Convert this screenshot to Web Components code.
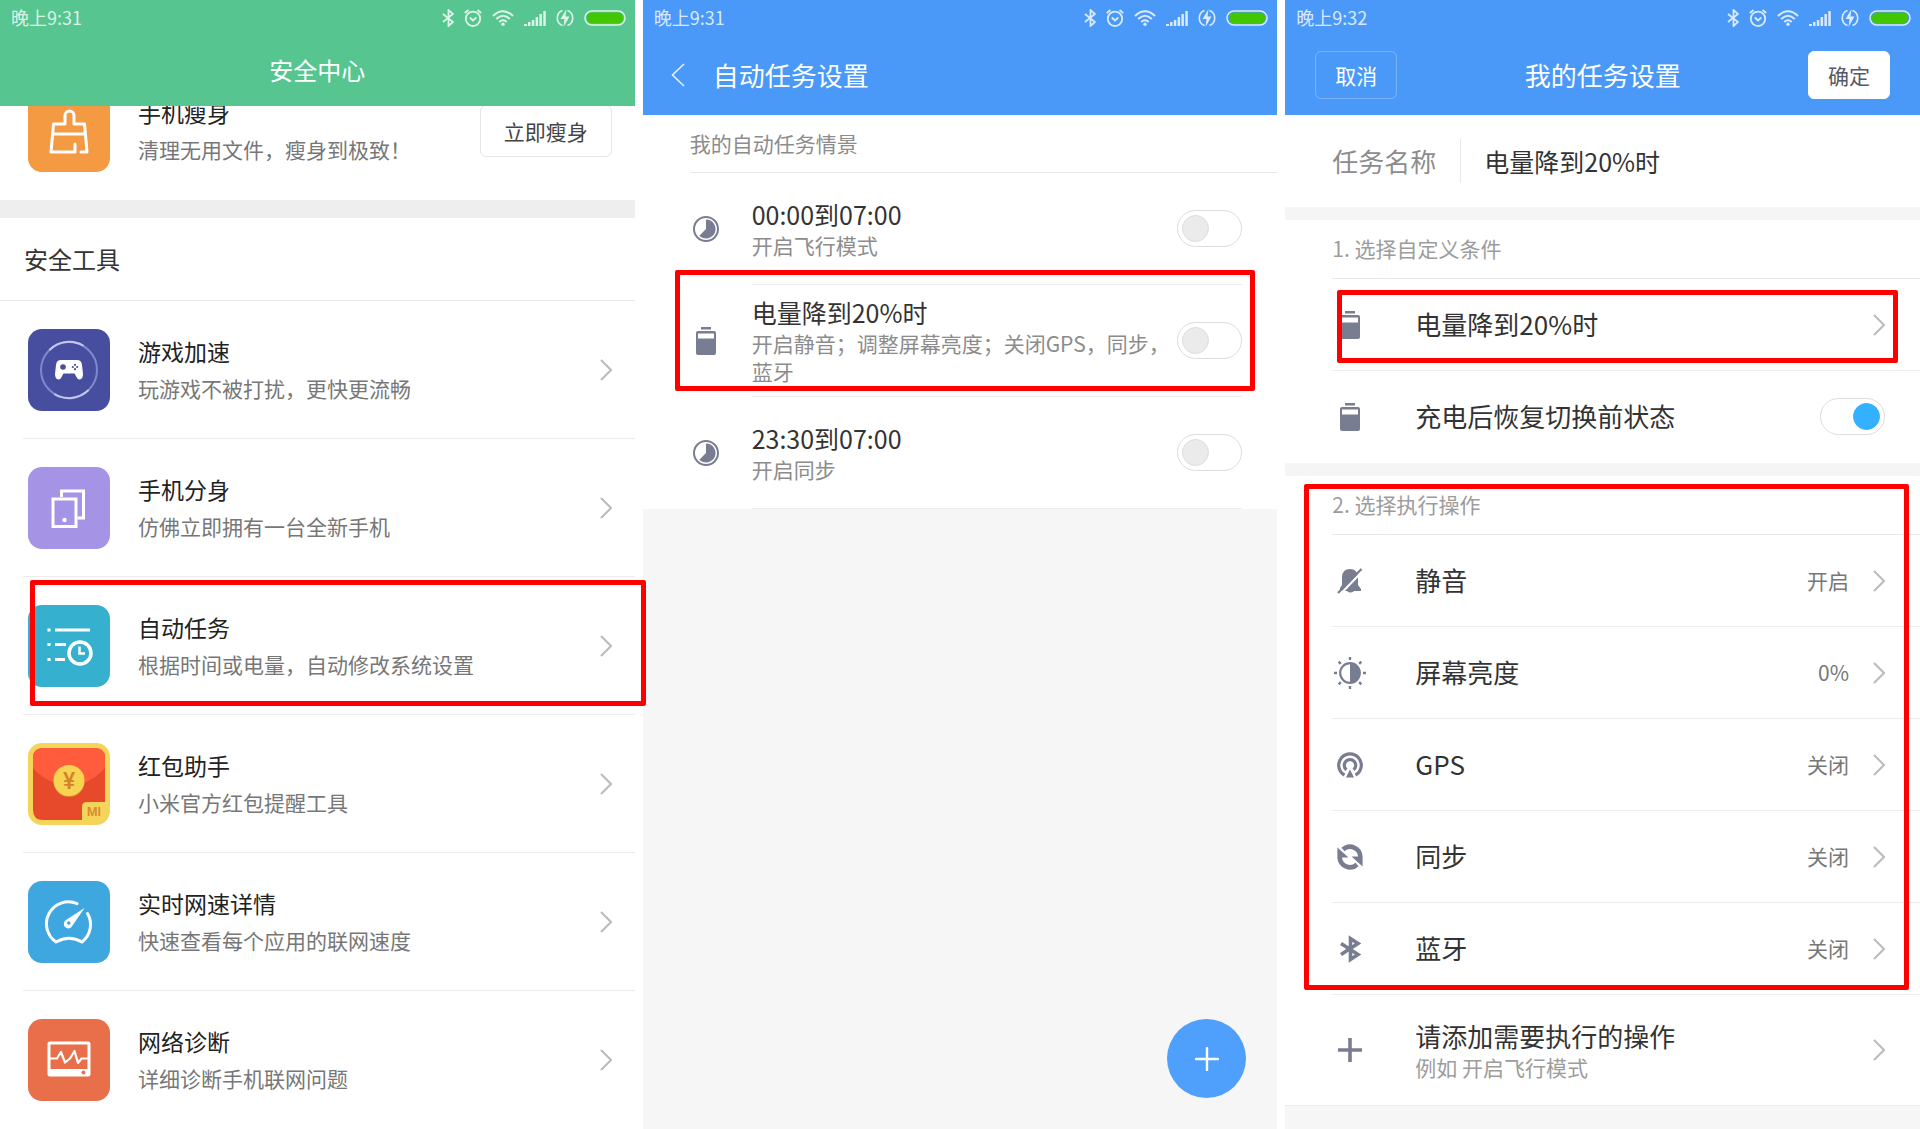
<!DOCTYPE html>
<html lang="zh-CN">
<head>
<meta charset="utf-8">
<title>安全中心</title>
<style>
    body {
        margin: 0;
        background: #fff;
        color: #333;
        font-family: "Noto Sans CJK SC", sans-serif;
        font-weight: 400;
    }

    main {
        display: grid;
        grid-template-columns: repeat(3, minmax(0, 1fr));
        gap: 8px;
        min-height: 100vh;
    }
</style>
</head>
<body>
<main>
    <phone-screen>
        <title-bar slot="header" time="晚上9:31" theme="green">安全中心</title-bar>
        <tool-row class="first" icon="broom" heading="手机瘦身" note="清理无用文件，瘦身到极致！" action="立即瘦身"></tool-row>
        <band-gap size="large"></band-gap>
        <section-title size="large">安全工具</section-title>
        <tool-row icon="game" heading="游戏加速" note="玩游戏不被打扰，更快更流畅"></tool-row>
        <tool-row icon="clone" heading="手机分身" note="仿佛立即拥有一台全新手机"></tool-row>
        <tool-row icon="task" heading="自动任务" note="根据时间或电量，自动修改系统设置">
            <mark-box style="--inset: 3px -11px 9px 30px"></mark-box>
        </tool-row>
        <tool-row icon="packet" heading="红包助手" note="小米官方红包提醒工具"></tool-row>
        <tool-row icon="speed" heading="实时网速详情" note="快速查看每个应用的联网速度"></tool-row>
        <tool-row icon="monitor" heading="网络诊断" note="详细诊断手机联网问题"></tool-row>
    </phone-screen>

    <phone-screen tinted>
        <title-bar slot="header" time="晚上9:31" back>自动任务设置</title-bar>
        <section-title>我的自动任务情景</section-title>
        <task-row icon="clock" heading="00:00到07:00" note="开启飞行模式"></task-row>
        <task-row icon="battery" heading="电量降到20%时" note="开启静音；调整屏幕亮度；关闭GPS，同步，蓝牙">
            <mark-box style="--inset: -15px 22px 6px 32px"></mark-box>
        </task-row>
        <task-row icon="clock" heading="23:30到07:00" note="开启同步"></task-row>
        <add-button slot="float" label="添加任务"></add-button>
    </phone-screen>

    <phone-screen tinted>
        <title-bar slot="header" time="晚上9:32" cancel="取消" confirm="确定">我的任务设置</title-bar>
        <name-field label="任务名称" value="电量降到20%时"></name-field>
        <band-gap></band-gap>
        <option-group heading="1. 选择自定义条件">
            <option-row icon="battery" heading="电量降到20%时">
                <mark-box style="--inset: 11px 22px 8px 52px"></mark-box>
            </option-row>
            <option-row icon="battery" heading="充电后恢复切换前状态" toggle plain></option-row>
        </option-group>
        <band-gap></band-gap>
        <option-group heading="2. 选择执行操作">
            <option-row icon="mute" heading="静音" value="开启"></option-row>
            <option-row icon="brightness" heading="屏幕亮度" value="0%"></option-row>
            <option-row icon="gps" heading="GPS" value="关闭"></option-row>
            <option-row icon="sync" heading="同步" value="关闭"></option-row>
            <option-row icon="bluetooth" heading="蓝牙" value="关闭"></option-row>
            <mark-box style="--inset: 8px 11px 5px 19px"></mark-box>
        </option-group>
        <option-row icon="plus" heading="请添加需要执行的操作" note="例如 开启飞行模式" wide></option-row>
    </phone-screen>
</main>

<script>
const html = String.raw;

// [width, height, markup], the viewBox is the same as the size
const ICONS = {
    // app tiles
    broom: [82, 82, html`<rect width="82" height="82" rx="14" fill="#f39a42"/>
        <path d="M47 62H23L25.500 34H37V25.500a4.500 4.500 0 0 1 9 0V34H56.500L59 62H53M25 44H57M47 54V62" fill="none" stroke="#fff" stroke-width="3" stroke-linejoin="round" stroke-linecap="round"/>`],
    game: [82, 82, html`<rect width="82" height="82" rx="14" fill="#474ea0"/>
        <circle cx="41" cy="41" r="28" fill="none" stroke="#8189cb" stroke-width="2"/>
        <path d="M22 20.500A28 28 0 0 1 55 16.500M60 61.500A28 28 0 0 1 27 65.500" fill="none" stroke="#c3c8ee" stroke-width="2" stroke-linecap="round"/>
        <path d="M33 31H49Q53.500 31 54 36L55 45Q55 50 51.500 50.500Q49.500 50.500 48.500 48L46.500 44.500H35.500L33.500 48Q32.500 50.500 30.500 50.500Q27 50 27 45L28 36Q28.500 31 33 31Z" fill="#fff"/>
        <circle cx="35" cy="38" r="2.800" fill="#474ea0"/>
        <g fill="#474ea0"><circle cx="47" cy="35.800" r="1.100"/><circle cx="47" cy="40.200" r="1.100"/><circle cx="44.800" cy="38" r="1.100"/><circle cx="49.200" cy="38" r="1.100"/></g>`],
    clone: [82, 82, html`<rect width="82" height="82" rx="14" fill="#a593e6"/>
        <path d="M33.500 30V24H55.500V51H49.500" fill="none" stroke="#fff" stroke-width="3"/>
        <rect x="25" y="32" width="23" height="27.500" fill="none" stroke="#fff" stroke-width="3"/>
        <circle cx="36.500" cy="53" r="2.200" fill="#fff"/>`],
    task: [82, 82, html`<rect width="82" height="82" rx="14" fill="#35b0ce"/>
        <path d="M19.500 25H22.500M27 25H62M19.500 39.500H22.500M27 39.500H38M19.500 54.500H22.500M27 54.500H37" stroke="#fff" stroke-width="3"/>
        <circle cx="52" cy="48" r="11" fill="none" stroke="#fff" stroke-width="3.500"/>
        <path d="M51.500 41.500V48.500H57" fill="none" stroke="#fff" stroke-width="2.500"/>`],
    packet: [82, 82, html`<rect width="82" height="82" rx="14" fill="#f4d55a"/>
        <path d="M15 5H67Q77 5 77 15V59H59Q54 59 54 64V77H15Q5 77 5 67V15Q5 5 15 5Z" fill="#e64a2b"/>
        <path d="M15 5H67Q77 5 77 15V25Q62 42 41 42T5 25V15Q5 5 15 5Z" fill="#ff5c3d"/>
        <circle cx="41" cy="38.500" r="15.500" fill="#dd8d31"/>
        <circle cx="41" cy="37.500" r="15.500" fill="#f6d350"/>
        <text x="41" y="46" text-anchor="middle" font-family="Roboto, sans-serif" font-size="23" font-weight="500" fill="#d5822c">¥</text>
        <text x="66" y="73" text-anchor="middle" font-family="Roboto, sans-serif" font-size="12" font-weight="700" fill="#dd8a30">MI</text>`],
    speed: [82, 82, html`<rect width="82" height="82" rx="14" fill="#3ea7e0"/>
        <path d="M49 22.600A22 22 0 0 0 28 61Q41 53.500 54 61A22 22 0 0 0 59.500 32.500" fill="none" stroke="#fff" stroke-width="3" stroke-linecap="round" stroke-linejoin="round"/>
        <path d="M56.500 27L44.500 44.500A4.500 4.500 0 1 1 38 39Z" fill="#fff"/>
        <circle cx="40.800" cy="42" r="1.800" fill="#3ea7e0"/>`],
    monitor: [82, 82, html`<rect width="82" height="82" rx="14" fill="#e86f4a"/>
        <rect x="21" y="24" width="40" height="32" rx="1" fill="none" stroke="#fff" stroke-width="3"/>
        <path d="M21 50H61V57H21Z" fill="#fff"/>
        <path d="M20 39.500H29L33 33L37 43.500L42 39.500L46.500 32L50 44L53.500 39.500H62" fill="none" stroke="#fff" stroke-width="2.200" stroke-linejoin="round"/>
        <circle cx="55.500" cy="53.500" r="2" fill="#e86f4a"/>`],

    // list glyphs
    clock: [26, 26, html`<circle cx="13" cy="13" r="12" fill="none" stroke="currentColor" stroke-width="2"/>
        <path d="M13 3.500A9.500 9.500 0 1 1 6.300 19.700L13 13Z" fill="currentColor"/>`],
    battery: [26, 28, html`<path d="M8 0H18V2.500H8ZM5 4H21Q23 4 23 6V26Q23 28 21 28H5Q3 28 3 26V6Q3 4 5 4ZM5 6.500V11.500H21V6.500Z" fill="currentColor" fill-rule="evenodd"/>`],
    mute: [26, 26, html`<path d="M13 1Q5.500 1 5 9V17L3 20V23H10Q13.500 26 17 23H24V21L21 17V9Q20.500 1 13 1Z" fill="currentColor"/>
        <path d="M27 1.500L3 26.500" stroke="#fff" stroke-width="2.200"/>
        <path d="M24.500 1L1 25" stroke="currentColor" stroke-width="2.200"/>`],
    brightness: [32, 32, html`<circle cx="16" cy="16" r="9.800" fill="none" stroke="currentColor" stroke-width="2.200"/>
        <path d="M16 6A10 10 0 0 1 16 26Z" fill="currentColor"/>
        <path d="M16 0V3M16 29V32M0 16H3M29 16H32M4.700 4.700L6.800 6.800M25.200 25.200L27.300 27.300M4.700 27.300L6.800 25.200M25.200 6.800L27.300 4.700" stroke="currentColor" stroke-width="2.400"/>`],
    gps: [26, 26, html`<path d="M7.500 23A11.300 11.300 0 1 1 18.500 23M9.500 17.800A5.700 5.700 0 1 1 16.500 17.800" fill="none" stroke="currentColor" stroke-width="3.200"/>
        <path d="M13 17.500L17 25.500H9Z" fill="currentColor"/>`],
    sync: [26, 26, html`<path d="M6 5.500A10.300 10.300 0 0 1 23.300 13M20 20.500A10.300 10.300 0 0 1 2.700 13" fill="none" stroke="currentColor" stroke-width="4.600"/>
        <path d="M14.500 12.500H25.600V22.500ZM11.500 13.500H.4V3.500Z" fill="currentColor"/>`],
    bluetooth: [26, 28, html`<path d="M4 8.500L21 19.500L13.500 24.500V3.500L21 8.500L4 19.500" fill="none" stroke="currentColor" stroke-width="3.600"/>`],
    plus: [26, 26, html`<path d="M13 1V25M1 13H25" stroke="currentColor" stroke-width="3.600"/>`],
    chevron: [12, 22, html`<path d="M1 1L11 11L1 21" fill="none" stroke="currentColor" stroke-width="2"/>`],
    back: [14, 24, html`<path d="M13 1L1.500 12L13 23" fill="none" stroke="currentColor" stroke-width="1.600" opacity=".85"/>`],
    add: [24, 24, html`<path d="M12 1V23M1 12H23" stroke="currentColor" stroke-width="2.400" stroke-linecap="round"/>`],

    // status bar
    'st-bluetooth': [12, 18, html`<path d="M1 5L11 13L6.500 17V1L11 5L1 13" fill="none" stroke="currentColor" stroke-width="1.800"/>`],
    'st-alarm': [18, 18, html`<circle cx="9" cy="9.800" r="7.200" fill="none" stroke="currentColor" stroke-width="1.800"/>
        <path d="M.8 4L4.500 1M17.200 4L13.500 1M5.800 8.500L9 11.500L12.300 8.500" fill="none" stroke="currentColor" stroke-width="1.800"/>`],
    'st-wifi': [22, 16, html`<path d="M1 6Q11-3.500 21 6M4.200 9Q11 2.500 17.800 9M7.300 12Q11 8.500 14.700 12" fill="none" stroke="currentColor" stroke-width="2"/>
        <circle cx="11" cy="14.200" r="1.700" fill="currentColor"/>`],
    'st-signal': [22, 15, html`<path d="M0 13H3V15H0ZM4 11H6.500V15H4ZM7.800 9H10.300V15H7.800ZM11.600 6H14.100V15H11.600ZM15.400 3H17.900V15H15.400ZM19.300 0H21.800V15H19.300Z" fill="currentColor"/>`],
    'st-charge': [18, 18, html`<path d="M6.500 1.500A8 8 0 0 0 6.500 16.500M11.500 1.500A8 8 0 0 1 11.500 16.500" fill="none" stroke="currentColor" stroke-width="1.600"/>
        <path d="M10.500 0L4.500 10H8.500L7.500 18L13.500 7.500H9.500Z" fill="currentColor"/>`],
    'st-power': [42, 16, html`<rect x="1" y="1" width="40" height="14" rx="7" fill="none" stroke="currentColor" stroke-width="1.500"/>
        <rect x="3" y="2.500" width="36" height="11" rx="5" fill="#42c600"/>`],
};

const icon = name => {
    const [w, h, body] = ICONS[name];
    return html`<svg class="Icon" width="${w}" height="${h}" viewBox="0 0 ${w} ${h}" aria-hidden="true">${body}</svg>`;
};

// Shared reset for every shadow root
const base = html`
    <style>
        :host { display: block; }
        *, :host { box-sizing: border-box; }
        a { color: inherit; text-decoration: none; }
        button, input { font: inherit; margin: 0; }
        .Icon { display: block; flex: none; }
    </style>
`;

class BaseElement extends HTMLElement {
    constructor() {
        super();
        this.attachShadow({ mode: 'open' });
    }

    connectedCallback() {
        this.shadowRoot.innerHTML = base + this.render();
    }

    attr(name) {
        return this.getAttribute(name) || '';
    }
}

class PhoneScreen extends BaseElement {
    render() {
        return html`
            <style>
                :host { position: relative; background: #fff; }
                :host([tinted]) { background: #f6f6f6; }
                ::slotted([slot=header]) { position: relative; z-index: 1; }
                ::slotted([slot=float]) { position: absolute; right: 31px; bottom: 31px; }
                /* list is scrolled a little way under the header */
                ::slotted(.first) { margin-top: -44px; }
            </style>
            <slot name="header"></slot>
            <slot></slot>
            <slot name="float"></slot>
        `;
    }
}

class StatusBar extends BaseElement {
    render() {
        return html`
            <style>
                :host {
                    display: flex;
                    align-items: center;
                    justify-content: space-between;
                    height: 36px;
                    padding: 0 9px 0 11px;
                    color: rgba(255, 255, 255, .8);
                    font-size: 18px;
                    line-height: 34px;
                }
                span { height: 36px; }
                .Icons { display: flex; align-items: center; gap: 10px; }
            </style>
            <span>${this.attr('time')}</span>
            <div class="Icons">
                ${['st-bluetooth', 'st-alarm', 'st-wifi', 'st-signal', 'st-charge', 'st-power'].map(icon).join('')}
            </div>
        `;
    }
}

class TitleBar extends BaseElement {
    render() {
        const back = this.hasAttribute('back');
        const cancel = this.attr('cancel');
        return html`
            <style>
                :host { background: #4a99f8; color: #fff; }
                :host([theme=green]) { background: #56c590; }
                .Bar {
                    display: grid;
                    grid-template-columns: 1fr auto 1fr;
                    align-items: center;
                    height: 79px;
                    padding: 0 30px 2px;
                }
                :host([theme=green]) .Bar { height: 70px; }
                :host([back]) .Bar { grid-template-columns: auto 1fr; gap: 28px; padding-left: 28px; }
                h1 { grid-column: 2; margin: 0; font-size: 26px; font-weight: 400; line-height: 36px; }
                :host([theme=green]) h1 { font-size: 24px; }
                button {
                    width: 82px;
                    height: 48px;
                    padding: 0;
                    border: 1px solid rgba(255, 255, 255, .25);
                    border-radius: 6px;
                    background: none;
                    color: #fff;
                    font-size: 21px;
                }
                .confirm { justify-self: end; border-color: #fff; background: #fff; color: #555a66; }
            </style>
            <status-bar time="${this.attr('time')}"></status-bar>
            <div class="Bar">
                ${back ? html`<a href="#" aria-label="返回">${icon('back')}</a>` : ''}
                ${cancel ? html`<button type="button">${cancel}</button>` : ''}
                <h1><slot></slot></h1>
                ${cancel ? html`<button type="button" class="confirm">${this.attr('confirm')}</button>` : ''}
            </div>
        `;
    }
}

class BandGap extends BaseElement {
    render() {
        return html`
            <style>
                :host { height: 13px; background: #f5f5f5; }
                :host([size=large]) { height: 18px; background: #eee; }
            </style>
        `;
    }
}

class SectionTitle extends BaseElement {
    render() {
        return html`
            <style>
                :host { padding-left: 47px; background: #fff; color: #8c8c8c; }
                h2 {
                    margin: 0;
                    height: 58px;
                    border-bottom: 1px solid #e8e8e8;
                    font-size: 21px;
                    font-weight: inherit;
                    line-height: 56px;
                }
                :host([size=large]) { padding-left: 0; color: #333; }
                :host([size=large]) h2 {
                    height: 83px;
                    padding-left: 24px;
                    font-size: 24px;
                    line-height: 81px;
                }
            </style>
            <h2><slot></slot></h2>
        `;
    }
}

class ToolRow extends BaseElement {
    render() {
        const action = this.attr('action');
        const tag = action ? 'div' : 'a href="#"';
        return html`
            <style>
                :host { position: relative; padding-left: 23px; }
                .Row {
                    display: flex;
                    align-items: center;
                    height: 138px;
                    padding: 0 23px 0 5px;
                    border-bottom: 1px solid #ececec;
                }
                :host([action]) .Row, :host(:last-of-type) .Row { border-color: transparent; }
                .Text { flex: 1; margin-left: 28px; line-height: 37px; }
                .Heading { color: #222; font-size: 23px; }
                .Note { color: #777; font-size: 21px; }
                .Row > .Icon:last-child { color: #bbb; }
                button {
                    width: 132px;
                    height: 52px;
                    padding: 0;
                    border: 1px solid #e6e6e6;
                    border-radius: 6px;
                    background: #fff;
                    color: #444;
                    font-size: 21px;
                }
            </style>
            <${tag} class="Row">
                ${icon(this.attr('icon'))}
                <div class="Text">
                    <div class="Heading">${this.attr('heading')}</div>
                    <div class="Note">${this.attr('note')}</div>
                </div>
                ${action ? html`<button type="button">${action}</button>` : icon('chevron')}
            </${tag.split(' ')[0]}>
            <slot></slot>
        `;
    }
}

// Switch look for a native checkbox, shared by the two row types
const switchStyle = html`
    <style>
        input[type=checkbox] {
            appearance: none;
            flex: none;
            display: flex;
            align-items: center;
            width: 65px;
            height: 37px;
            padding: 0 4px;
            border: 1px solid #ddd;
            border-radius: 19px;
            background: #fff;
        }
        input[type=checkbox]::before {
            content: "";
            width: 27px;
            height: 27px;
            box-sizing: border-box;
            border: 1px solid #ddd;
            border-radius: 50%;
            background: #ebebeb;
        }
        input[type=checkbox]:checked { justify-content: flex-end; }
        input[type=checkbox]:checked::before { border-color: #33b0ff; background: #33b0ff; }
    </style>
`;

class TaskRow extends BaseElement {
    render() {
        return html`
            ${switchStyle}
            <style>
                :host { position: relative; background: #fff; }
                .Row {
                    display: flex;
                    align-items: center;
                    min-height: 111px;
                    padding: 0 35px 0 50px;
                }
                .Icon { color: #787d92; }
                .Text { flex: 1; margin: 0 4px 0 33px; padding-bottom: 2px; }
                .Heading { font-size: 25px; line-height: 34px; }
                .Note { color: #8c8c8c; font-size: 21px; line-height: 28px; }
                .Line { height: 1px; margin: 0 35px 0 109px; background: #ececec; }
            </style>
            <label class="Row">
                ${icon(this.attr('icon'))}
                <div class="Text">
                    <div class="Heading">${this.attr('heading')}</div>
                    <div class="Note">${this.attr('note')}</div>
                </div>
                <input type="checkbox" role="switch">
            </label>
            <div class="Line"></div>
            <slot></slot>
        `;
    }
}

class AddButton extends BaseElement {
    render() {
        return html`
            <style>
                button {
                    display: grid;
                    place-items: center;
                    width: 79px;
                    height: 79px;
                    padding: 0;
                    border: 0;
                    border-radius: 50%;
                    background: #4f9ffc;
                    color: #fff;
                }
            </style>
            <button type="button" aria-label="${this.attr('label')}">${icon('add')}</button>
        `;
    }
}

class NameField extends BaseElement {
    render() {
        return html`
            <style>
                :host {
                    display: flex;
                    align-items: center;
                    height: 92px;
                    padding: 0 35px 0 47px;
                    background: #fff;
                }
                label { color: #8c8c8c; font-size: 26px; line-height: 44px; }
                input {
                    flex: 1;
                    min-width: 0;
                    height: 44px;
                    margin-left: 24px;
                    padding: 0 0 0 23px;
                    border: 0;
                    border-left: 1px solid #e8e8e8;
                    background: none;
                    color: #333;
                    font-size: 25px;
                }
            </style>
            <label for="name">${this.attr('label')}</label>
            <input id="name" type="text" value="${this.attr('value')}">
        `;
    }
}

class OptionGroup extends BaseElement {
    render() {
        return html`
            <style>
                :host { position: relative; background: #fff; }
                h2 {
                    height: 59px;
                    margin: 0 0 0 47px;
                    border-bottom: 1px solid #e8e8e8;
                    color: #9c9c9c;
                    font-size: 21px;
                    font-weight: inherit;
                    line-height: 56px;
                }
            </style>
            <h2>${this.attr('heading')}</h2>
            <slot></slot>
        `;
    }
}

class OptionRow extends BaseElement {
    render() {
        const toggle = this.hasAttribute('toggle');
        const tag = toggle ? 'label' : 'a href="#"';
        const note = this.attr('note');
        const value = this.attr('value');
        return html`
            ${switchStyle}
            <style>
                :host { position: relative; padding-left: 47px; background: #fff; }
                .Row {
                    display: flex;
                    align-items: center;
                    height: 92px;
                    padding-right: 35px;
                    border-bottom: 1px solid #ececec;
                }
                :host([plain]) .Row { border-color: transparent; }
                :host([wide]) { padding-left: 0; }
                :host([wide]) .Row { height: 111px; padding-left: 47px; }
                .Glyph { display: flex; justify-content: center; width: 36px; color: #787d92; }
                .Text { flex: 1; margin-left: 47px; padding-bottom: 1px; }
                .Heading { font-size: 26px; line-height: 34px; }
                .Note { color: #9c9c9c; font-size: 21px; line-height: 28px; }
                .Value { margin-right: 24px; padding-bottom: 2px; color: #777; font-size: 21px; }
                .Row > .Icon { color: #bbb; }
            </style>
            <${tag} class="Row">
                <span class="Glyph">${icon(this.attr('icon'))}</span>
                <div class="Text">
                    <div class="Heading">${this.attr('heading')}</div>
                    ${note ? html`<div class="Note">${note}</div>` : ''}
                </div>
                ${value ? html`<span class="Value">${value}</span>` : ''}
                ${toggle ? html`<input type="checkbox" role="switch" checked>` : icon('chevron')}
            </${tag.split(' ')[0]}>
            <slot></slot>
        `;
    }
}

// Red frame drawn over the rows, --inset is relative to its host row or group
class MarkBox extends BaseElement {
    render() {
        return html`
            <style>
                :host {
                    position: absolute;
                    inset: var(--inset, 0);
                    z-index: 2;
                    border: 5px solid #f00;
                    border-radius: 2px;
                    pointer-events: none;
                }
            </style>
        `;
    }
}

customElements.define('status-bar', StatusBar);
customElements.define('title-bar', TitleBar);
customElements.define('band-gap', BandGap);
customElements.define('section-title', SectionTitle);
customElements.define('tool-row', ToolRow);
customElements.define('task-row', TaskRow);
customElements.define('add-button', AddButton);
customElements.define('name-field', NameField);
customElements.define('option-group', OptionGroup);
customElements.define('option-row', OptionRow);
customElements.define('mark-box', MarkBox);
customElements.define('phone-screen', PhoneScreen);
</script>
</body>
</html>
